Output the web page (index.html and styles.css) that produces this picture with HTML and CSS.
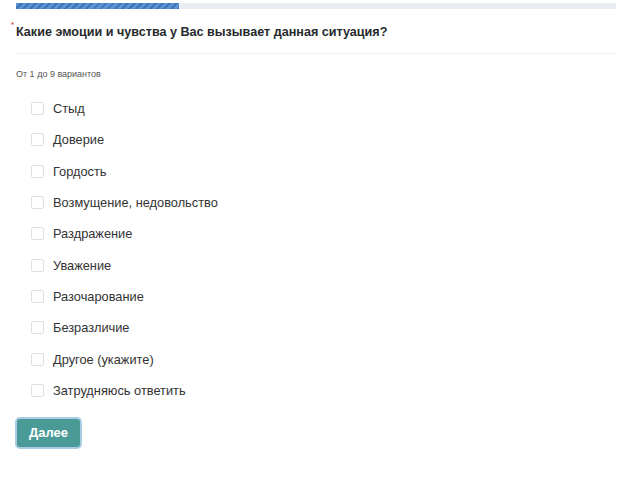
FILE: index.html
```html
<!DOCTYPE html>
<html lang="ru">
<head>
  <meta charset="UTF-8">
  <meta name="viewport" content="width=device-width, initial-scale=1.0">
  <title>Опрос</title>
  <link rel="stylesheet" href="styles.css">
</head>
<body>
  <div class="progress">
    <div class="progress-bar"></div>
  </div>
  <div class="question">
    <h1 class="question-title"><span class="required">*</span>Какие эмоции и чувства у Вас вызывает данная ситуация?</h1>
    <div class="hint">От 1 до 9 вариантов</div>
    <ul class="options">
      <li class="option"><span class="box"></span>Стыд</li>
      <li class="option"><span class="box"></span>Доверие</li>
      <li class="option"><span class="box"></span>Гордость</li>
      <li class="option"><span class="box"></span>Возмущение, недовольство</li>
      <li class="option"><span class="box"></span>Раздражение</li>
      <li class="option"><span class="box"></span>Уважение</li>
      <li class="option"><span class="box"></span>Разочарование</li>
      <li class="option"><span class="box"></span>Безразличие</li>
      <li class="option"><span class="box"></span>Другое (укажите)</li>
      <li class="option"><span class="box"></span>Затрудняюсь ответить</li>
    </ul>
    <button class="next-btn">Далее</button>
  </div>
</body>
</html>
```

FILE: styles.css
```css
body {
  font-family: "Liberation Sans", Arial, sans-serif;
  margin: 0;
  padding: 3px 24px 0 16px;
  background-color: #fff;
  color: #2b2f33;
}
.progress {
  height: 6px;
  background-color: #e9edf2;
}
.progress-bar {
  width: 163px;
  height: 100%;
  background-color: #4f86c8;
  background-image: repeating-linear-gradient(135deg, #5b92d4 0 3px, #3f74b8 3px 5px);
}
.question {
  padding-top: 14px;
}
.question-title {
  position: relative;
  margin: 0;
  padding: 2px 0 14px;
  font-size: 12.6px;
  font-weight: bold;
  color: #262a2e;
  border-bottom: 1px solid #eef0f2;
}
.required {
  position: absolute;
  left: -5px;
  top: -3px;
  color: #d9534f;
  font-size: 8px;
}
.hint {
  margin-top: 15px;
  font-size: 9px;
  color: #555;
}
.options {
  list-style: none;
  margin: 14px 0 0;
  padding: 0 0 0 15px;
}
.option {
  display: flex;
  align-items: center;
  gap: 9px;
  height: 31.3px;
  font-size: 12.8px;
  color: #333;
}
.box {
  width: 11px;
  height: 11px;
  border: 1px solid #dde1e6;
  border-radius: 2px;
  background: #fff;
}
.next-btn {
  margin-top: 11px;
  margin-left: -1px;
  padding: 0 12px;
  height: 32px;
  font-family: inherit;
  font-size: 13px;
  font-weight: bold;
  color: #fff;
  background-color: #4a9a97;
  border: 2px solid #a9cde4;
  border-radius: 5px;
}
```
